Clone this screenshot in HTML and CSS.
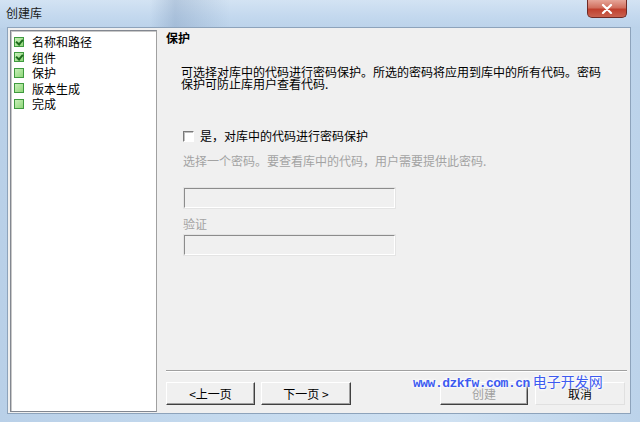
FILE: index.html
```html
<!DOCTYPE html>
<html lang="zh-CN">
<head>
  <meta charset="UTF-8"/>
  <title>创建库</title>
  <link rel="stylesheet" href="styles.css">
</head>
<body>
  <div class="titlebar">
    <span class="title">创建库</span>
    <button class="close-btn">
      <svg viewBox="0 0 12 10" width="12" height="10"><path d="M2 1 L10 9 M10 1 L2 9" stroke="#fff" stroke-width="2.2" stroke-linecap="round"/></svg>
    </button>
  </div>

  <div class="client">
    <ul class="steps">
      <li><span class="step-box done"></span>名称和路径</li>
      <li><span class="step-box done"></span>组件</li>
      <li><span class="step-box"></span>保护</li>
      <li><span class="step-box"></span>版本生成</li>
      <li><span class="step-box"></span>完成</li>
    </ul>

    <section class="panel">
      <h2 class="panel-title">保护</h2>
      <p class="desc">可选择对库中的代码进行密码保护。所选的密码将应用到库中的所有代码。密码<br>保护可防止库用户查看代码.</p>

      <label class="check-row"><span class="check"></span>是，对库中的代码进行密码保护</label>
      <p class="hint">选择一个密码。要查看库中的代码，用户需要提供此密码.</p>

      <div class="field first"></div>
      <p class="field-label">验证</p>
      <div class="field"></div>

      <div class="spacer"></div>
      <hr class="sep"/>

      <div class="actions">
        <button class="btn">&lt;上一页</button>
        <button class="btn btn-next">下一页 &gt;</button>
        <button class="btn btn-create" disabled>创建</button>
        <button class="btn btn-cancel">取消</button>
      </div>
    </section>
  </div>

  <div class="watermark"><span class="wm-url">www.dzkfw.com.cn</span><span class="wm-name">电子开发网</span></div>
</body>
</html>
```

FILE: styles.css
```css
/* ===== Window frame ===== */
* { margin: 0; padding: 0; box-sizing: border-box; }
body {
  width: 640px;
  height: 422px;
  overflow: hidden;
  display: flex;
  flex-direction: column;
  position: relative;
  font-family: "Noto Sans CJK SC", "Liberation Sans", sans-serif;
  font-size: 12px;
  color: #000;
  background: linear-gradient(90deg, #b9d0e8 0%, #c6dbef 40%, #cfe1f2 70%, #bcd3ea 100%);
}

.titlebar {
  height: 28px;
  display: flex;
  align-items: flex-start;
  padding-left: 6px;
  background:
    linear-gradient(90deg, transparent 150px, rgba(90,120,160,0.25) 175px, transparent 230px),
    linear-gradient(180deg, #d3e3f3 0%, #c3d8ee 60%, #bcd3ea 100%);
}
.titlebar .title { line-height: 26px; font-size: 12px; color: #1a1a1a; }
.close-btn {
  margin-left: auto;
  margin-right: 13px;
  width: 40px;
  height: 18px;
  border: 1px solid #6e2a25;
  border-top: none;
  border-radius: 0 0 5px 5px;
  background: linear-gradient(180deg, #e6a598 0%, #d1705f 45%, #c0402e 55%, #c9624f 100%);
  display: flex;
  align-items: center;
  justify-content: center;
}

.client {
  flex: 1;
  margin: 0 10px 9px 8px;
  display: flex;
  background: #f0f0f0;
  box-shadow: 0 0 0 1px #8da3bb;
}

/* ===== Step list ===== */
.steps {
  list-style: none;
  width: 147px;
  margin: 2px 0 1px 2px;
  padding: 3px 0 0 3px;
  background: #fff;
  border: 1px solid #828790;
  border-right-color: #a0a0a0;
  box-shadow: inset 1px 1px 0 #c8c8c8;
}
.steps li {
  display: flex;
  align-items: center;
  height: 15.5px;
  font-size: 12px;
}
.step-box {
  width: 10px;
  height: 10px;
  margin-right: 8px;
  border: 1px solid #3f9a3f;
  background: linear-gradient(135deg, #c7f0b8, #8fd67a);
  position: relative;
}
.step-box.done::after {
  content: "";
  position: absolute;
  left: 2px;
  top: 0px;
  width: 3px;
  height: 5px;
  border: solid #1d6b1d;
  border-width: 0 2px 2px 0;
  transform: rotate(40deg);
}

/* ===== Right panel ===== */
.panel {
  flex: 1;
  display: flex;
  flex-direction: column;
  padding: 3px 3px 8px 9px;
}
.panel-title { font-size: 12px; font-weight: 700; line-height: 14px; }
.desc { margin: 21px 0 0 15px; line-height: 12px; }
.check-row {
  display: flex;
  align-items: center;
  margin: 39px 0 0 17px;
  line-height: 14px;
}
.check {
  width: 11px;
  height: 11px;
  margin-right: 6px;
  background: #fff;
  border: 1px solid;
  border-color: #7a7a7a #fff #fff #7a7a7a;
  box-shadow: inset 1px 1px 0 #c0c0c0;
}
.hint { margin: 11px 0 0 17px; line-height: 14px; color: #a3a3a3; }
.field {
  width: 213px;
  height: 22px;
  margin: 3px 0 0 17px;
  background: #f0f0f0;
  border: 2px solid;
  border-color: #8c8c8c #fff #fff #8c8c8c;
  outline: 1px solid #e4e4e4;
  outline-offset: -1px;
}
.field.first { margin-top: 19px; }
.field-label { margin: 8px 0 0 17px; line-height: 14px; color: #a3a3a3; }

.spacer { flex: 1; }
.sep {
  border: none;
  border-top: 1px solid #a0a0a0;
  border-bottom: 1px solid #fff;
  margin-bottom: 10px;
}

/* ===== Buttons ===== */
.actions { display: flex; gap: 6px; margin-right: 2px; }
.btn {
  height: 23px;
  width: 89px;
  font-family: inherit;
  font-size: 12px;
  background: #f0f0f0;
  color: #000;
  border: 1px solid;
  border-color: #fff #404040 #404040 #fff;
  box-shadow: inset -1px -1px 0 #a0a0a0;
}
.btn-next { width: 90px; }
.btn-create { margin-left: auto; width: 88px; color: #a0a0a0; }
.btn-cancel { margin-left: 1px; width: 90px; border-color: #fff #e0e0e0 #e0e0e0 #fff; box-shadow: none; }

/* ===== Watermark overlay ===== */
.watermark {
  position: absolute;
  left: 413px;
  top: 371px;
  display: flex;
  align-items: baseline;
  gap: 3px;
  color: #3d5bf0;
  text-shadow: 0 0 3px #fff, 0 0 3px #fff, 0 0 5px #fff;
}
.wm-url { font-family: "Liberation Mono", monospace; font-size: 13px; font-weight: 700; letter-spacing: -0.5px; }
.wm-name { font-size: 14px; }
```
